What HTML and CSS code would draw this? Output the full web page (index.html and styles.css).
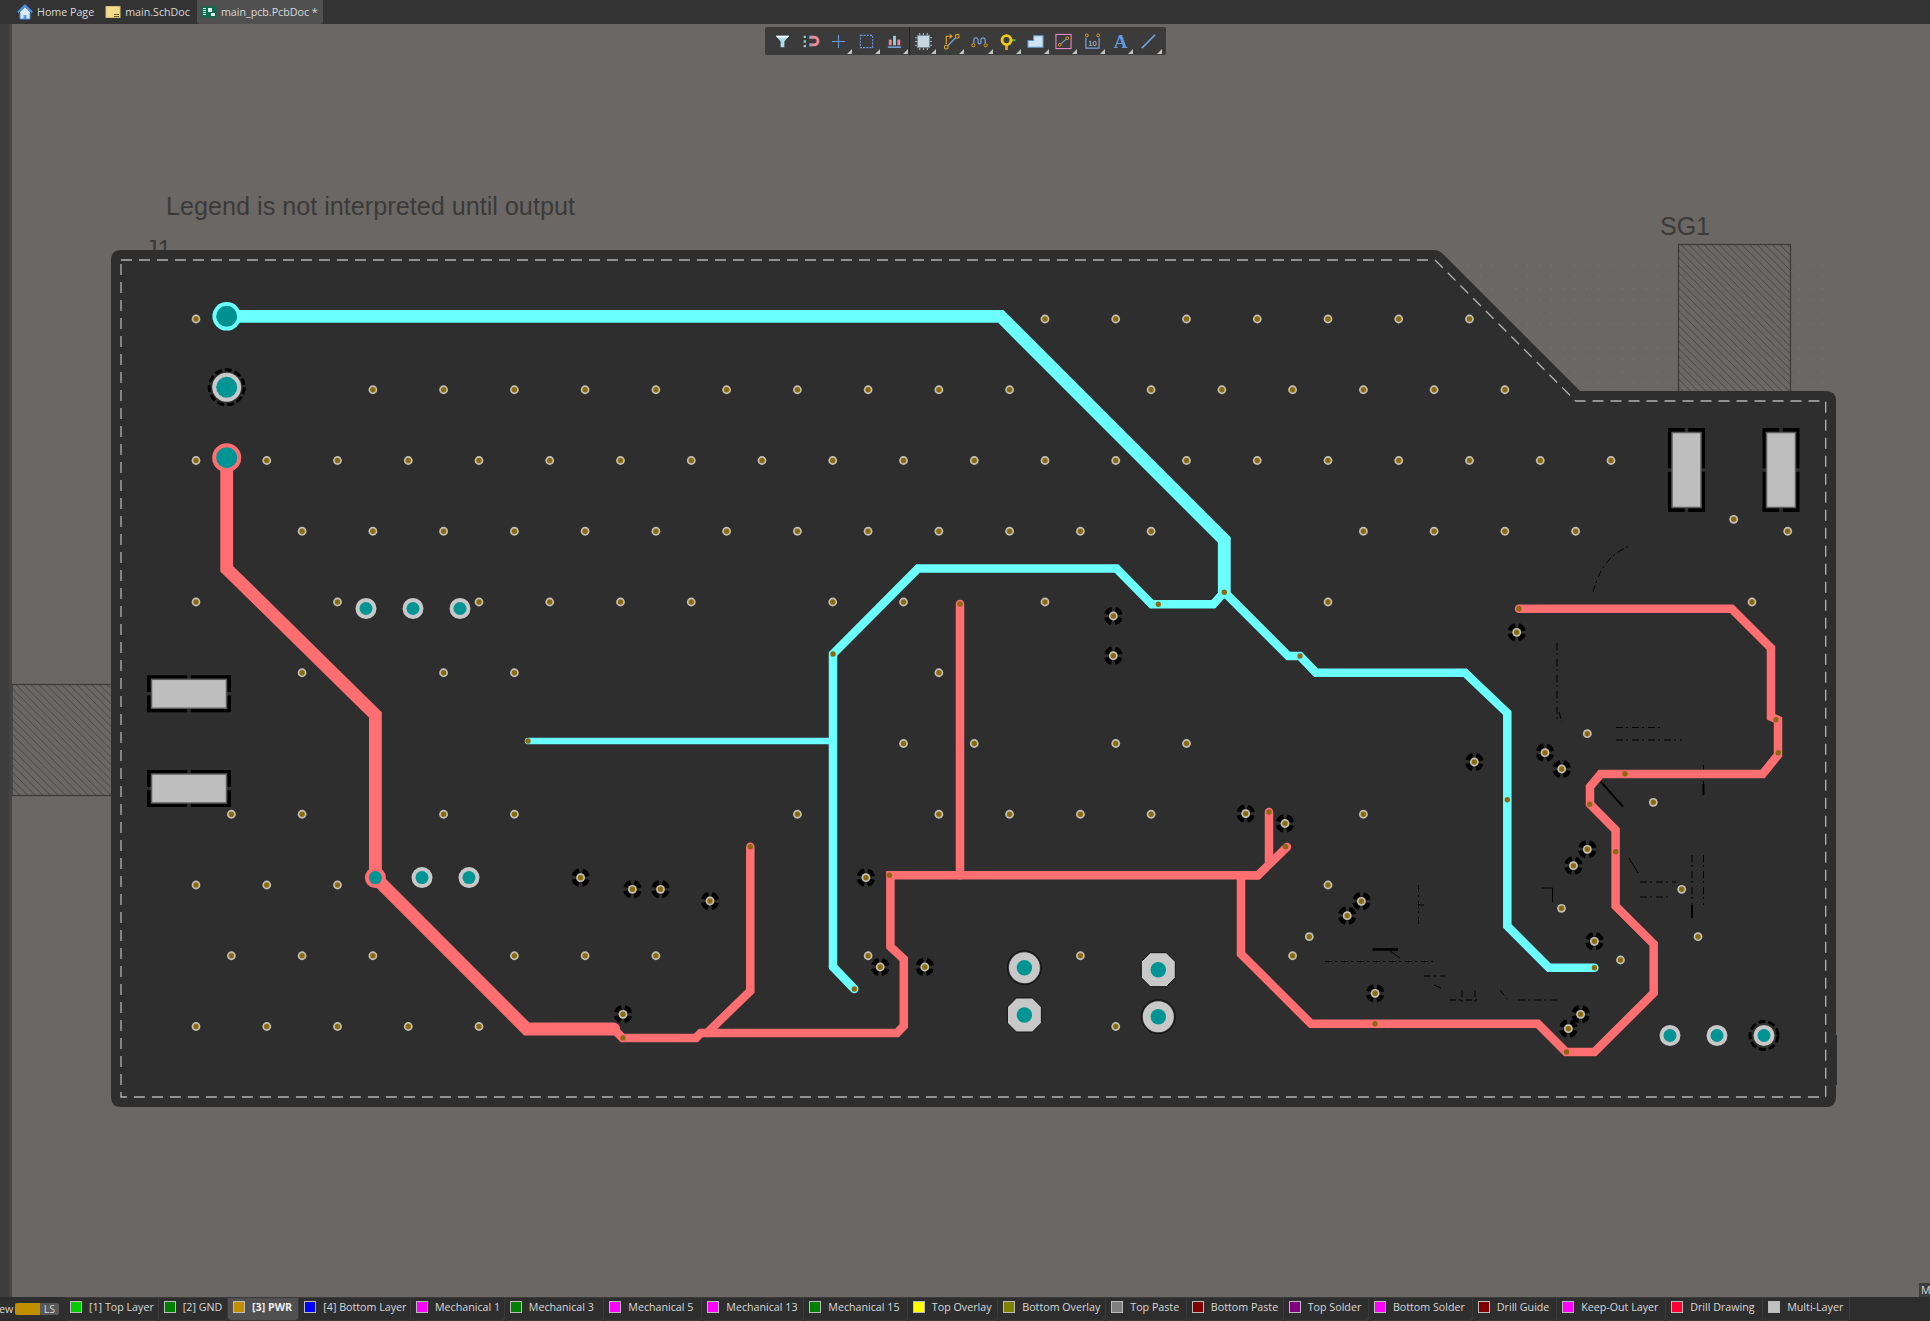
FILE: index.html
```html
<!DOCTYPE html>
<html lang="en">
<head>
    <meta charset="UTF-8">
    <meta name="viewport" content="width=device-width, initial-scale=1.0">
    <title>main_pcb.PcbDoc</title>
    <link rel="stylesheet" href="styles.css">
</head>
<body>
    <div class="tabbar">
        <div class="tab">
            <svg class="tab-icon" viewBox="0 0 16 16"><path d="M3 8v7h10V8L8 3z" fill="#dcebfb"/><path d="M6.5 15v-4h3v4z" fill="#5b9be8"/><path d="M.8 8.5 8 1.5l7.2 7" fill="none" stroke="#4a90e8" stroke-width="2"/><path d="M3 9v6h10V9" fill="none" stroke="#4a90e8" stroke-width="1"/></svg>
            <span>Home Page</span>
        </div>
        <div class="tab">
            <svg class="tab-icon" viewBox="0 0 16 16"><rect x="1" y="2.5" width="14" height="11" fill="#f7dc8c" stroke="#d9bf74"/><path d="M9 10.5h5M9 12.5h5" stroke="#6b5a2a"/></svg>
            <span>main.SchDoc</span>
        </div>
        <div class="tab tab-active">
            <svg class="tab-icon" viewBox="0 0 16 16"><rect x="0.5" y="2.5" width="15" height="11" fill="#0c6b50"/><path d="M2 4.5h3M2 6.5h3M2 8.5h3M2 10.5h3" stroke="#dff2ea"/><rect x="7" y="4" width="4" height="4" fill="#dff2ea"/><rect x="10" y="9" width="4" height="3" fill="#dff2ea"/></svg>
            <span>main_pcb.PcbDoc *</span>
        </div>
    </div>

    <div class="workspace">
        <div class="side-strip"></div>
        <div class="stage">
            <div class="toolbar">
                <div class="tool"><svg viewBox="0 0 18 18"><path d="M2 3h14l-5 6v6H7V9z" fill="#a9dcea"/><path d="M2 3h14l-1.5 2h-11z" fill="#eaf8fb"/></svg></div>
                <div class="tool"><svg viewBox="0 0 18 18"><path d="M8 3h5a5 5 0 0 1 0 11H8v-3h5a2 2 0 0 0 0-5H8z" fill="#f08a92"/><path d="M8 3h2v3H8zM8 11h2v3H8z" fill="#7fa8e0"/><path d="M3 3v12" stroke="#7fd0d0" stroke-width="2.4" stroke-dasharray="2.4 2.4"/></svg></div>
                <div class="tool has-menu"><svg viewBox="0 0 18 18"><path d="M9 2v14M2 9h14" stroke="#6f97dc" stroke-width="1.1" fill="none"/></svg></div>
                <div class="tool has-menu"><svg viewBox="0 0 18 18"><rect x="2.5" y="2.5" width="13" height="13" fill="none" stroke="#6f97e8" stroke-width="1.1" stroke-dasharray="2.2 1.2"/></svg></div>
                <div class="tool has-menu"><svg viewBox="0 0 18 18"><rect x="3" y="7" width="3" height="6" fill="#f08a92"/><rect x="7.5" y="3" width="3" height="10" fill="#8fd3e0"/><rect x="12" y="7" width="3" height="6" fill="#f08a92"/><path d="M2 15h14" stroke="#7fa8e0" stroke-width="1.6"/></svg></div>
                <div class="tool has-menu"><svg viewBox="0 0 18 18"><path d="M0 5h18M0 9h18M0 13h18M5 0v18M9 0v18M13 0v18" stroke="#a8b4bb" stroke-width="1.2"/><rect x="2.5" y="2.5" width="13" height="13" fill="#c6d6de" stroke="#6f8596"/></svg></div>
                <div class="tool has-menu"><svg viewBox="0 0 18 18"><circle cx="3.5" cy="15" r="2" fill="none" stroke="#e0a020" stroke-width="1.2"/><circle cx="15" cy="3.5" r="2" fill="none" stroke="#e0a020" stroke-width="1.2"/><path d="M5 13.5 13.5 5" stroke="#7f9cc8" stroke-width="1.4"/><path d="M3.5 12V3.5H9M7 1.500l2.500 2-2.500 2" fill="none" stroke="#e0a020" stroke-width="1.2"/></svg></div>
                <div class="tool has-menu"><svg viewBox="0 0 18 18"><circle cx="2.5" cy="13" r="1.7" fill="none" stroke="#e0a020"/><circle cx="15.500" cy="13" r="1.7" fill="none" stroke="#e0a020"/><path d="M3 11V7a2.3 2.3 0 0 1 4.500 0v3a1.500 1.500 0 0 0 3 0V7a2.3 2.3 0 0 1 4.500 0v4" fill="none" stroke="#7fa0d8" stroke-width="1.3"/></svg></div>
                <div class="tool has-menu"><svg viewBox="0 0 18 18"><path d="M11 6.5h6.500v2.200H11z" fill="#58b030"/><path d="M6.500 12h3v6h-3z" fill="#e8a020"/><circle cx="8" cy="7.500" r="4.800" fill="none" stroke="#f0c818" stroke-width="3"/></svg></div>
                <div class="tool has-menu"><svg viewBox="0 0 18 18"><path d="M1 15V8h6V3h10v12z" fill="#cfe6f2" stroke="#5f94c8" stroke-width="1.1"/></svg></div>
                <div class="tool has-menu"><svg viewBox="0 0 18 18"><rect x="1" y="1.5" width="16" height="15" fill="none" stroke="#f08ad0" stroke-width="1.1"/><circle cx="5" cy="12.500" r="1.500" fill="none" stroke="#e0a020"/><circle cx="13" cy="5.500" r="1.500" fill="none" stroke="#e0a020"/><path d="M6 11.500 12 6.500" stroke="#7f9cc8" stroke-width="1.3"/></svg></div>
                <div class="tool has-menu"><svg viewBox="0 0 18 18"><circle cx="3" cy="2.500" r="1.500" fill="none" stroke="#e0a020"/><circle cx="15" cy="2.500" r="1.500" fill="none" stroke="#e0a020"/><path d="M2 5v11h14V5" fill="none" stroke="#7fa0d8" stroke-width="1.3"/><text class="tool-number" x="9" y="13.500">10</text></svg></div>
                <div class="tool has-menu"><svg viewBox="0 0 18 18"><text class="tool-letter" x="9" y="16">A</text></svg></div>
                <div class="tool has-menu"><svg viewBox="0 0 18 18"><path d="M2 16 16 2" stroke="#6f9fdc" stroke-width="1.6"/></svg></div>
            </div>

            <svg class="board" width="1918" height="1273" viewBox="12 24 1918 1273">
                <defs>
                    <pattern id="hatch" patternUnits="userSpaceOnUse" width="7.6" height="7.6">
                        <path d="M-1-1 8.6 8.6M-1 6.600 1 8.600M6.600-1 8.600 1" stroke="#3a3a3a" stroke-width=".8"/>
                    </pattern>
                    <pattern id="griddots" patternUnits="userSpaceOnUse" width="11.8" height="11.8">
                        <rect x="5" y="5" width="1" height="1" fill="#7b7876"/>
                    </pattern>
                    <g id="via">
                        <circle r="4.4" fill="#c4c0b4"/>
                        <circle r="2.7" fill="#8b690f"/>
                    </g>
                    <g id="thermal">
                        <circle r="7" fill="none" stroke="#000" stroke-width="4.6" stroke-dasharray="7.5 3.5" stroke-dashoffset="-1.75"/>
                        <use href="#via"/>
                    </g>
                    <circle id="drill" r="2.7" fill="#8b690f"/>
                    <g id="small-pad">
                        <circle r="10.5" fill="#c8c8c8"/>
                        <circle r="6.5" fill="#009494"/>
                    </g>
                    <g id="big-pad">
                        <circle r="17" fill="none" stroke="#111" stroke-width="1"/>
                        <circle r="15.5" fill="#c8c8c8"/>
                        <circle r="7.7" fill="#009494"/>
                    </g>
                    <g id="octa-pad">
                        <path d="M-8-17H8L17-8V8L8 17H-8L-17 8V-8z" fill="#c8c8c8" stroke="#111" stroke-width="1"/>
                        <circle r="7.7" fill="#009494"/>
                    </g>
                    <g id="silver-pad">
                        <rect x="-42" y="-18.5" width="84" height="37" fill="#000"/>
                        <path d="M-44 0H44M0-20V20" stroke="#2e2e2e" stroke-width="3.5"/>
                        <rect x="-37.5" y="-14.5" width="75" height="29" fill="#bebebe" stroke="#5c5c5c" stroke-width="1.5"/>
                    </g>
                </defs>

                <!-- things under the board -->
                <rect x="1452" y="258" width="374" height="133" fill="url(#griddots)"/>
                <rect class="keepout-body" x="12" y="684.5" width="105" height="111"/>
                <rect class="keepout-body" x="1678.5" y="244.5" width="112" height="152"/>
                <text class="legend legend-long" x="166" y="215">Legend is not interpreted until output</text>
                <text class="legend" x="1660" y="235">SG1</text>
                <text class="legend" x="145" y="258">J1</text>

                <path class="pcb" d="M121 250H1433Q1439 250 1443 254L1580 391H1826Q1836 391 1836 401V1035H1837V1085H1836V1097Q1836 1107 1826 1107H121Q111 1107 111 1097V260Q111 250 121 250Z"/>
                <path class="outline" d="M121 260H1435L1575.7 401H1825.7V1097H121Z"/>

                <!-- silkscreen leftovers -->
                <g class="scribble">
                    <path d="M1557 643V722M1616 740H1682M1616 727.5H1660M1703.5 765V795M1593 592C1598 575 1605 555 1632 545"/>
                    <path d="M1325 961.5H1434M1518 1000H1558M1449 1000H1480M1424 976H1445M1418.5 885V925M1692 855V915M1703.5 855V905M1640 882H1676M1640 897H1672"/>
                    <path d="M1462 990V1002M1475 990V1002M1500 990 1508 1000M1559 712 1562 722M1418 905H1424"/>
                    <path class="solid" d="M1541 888H1552.5V902M1629 858 1638 873M1434 985 1441 988M1386 948 1400 958"/>
                    <path class="solid heavy" d="M1372.5 949.5H1398"/>
                    <path class="solid medium" d="M1600.7 781.7 1623 806.7M1692 905V918M1703.5 784V795"/>
                </g>

                <!-- top layer traces -->
                <g class="trace trace-cyan">
                    <path class="w13" d="M226.7 316.3H1000.7L1224.3 540V592"/>
                    <path d="M833 966.7V654L918 568.5H1116.5L1151.7 604.3H1213.3L1224.3 592L1288.3 656H1300L1316 672.7H1465L1507.3 713V926L1549 967.7H1594.4"/>
                    <path d="M833 966.7 854.3 989"/>
                    <path class="w6" d="M528 741H833"/>
                </g>

                <!-- power layer traces -->
                <g class="trace trace-red">
                    <path class="w13" d="M226.7 457.7V568.7L375.4 715V877.6L526.8 1029H613.7"/>
                    <path d="M613.7 1029 622.6 1038H696L700.7 1033H897L903.8 1026V959L890.4 946.7V875.3H1258L1287 847"/>
                    <path d="M960 604V875.3M750.3 846.7V991L707 1033M1269 812V862"/>
                    <path d="M1258 875.3H1241V954L1311 1023.7H1537.8L1566 1052H1594.4L1653.7 993V944L1615.6 906V830L1590 804V786.7L1600.7 774H1762.7L1778 755V720L1771 716.7V648L1731.7 608.7H1519"/>
                </g>

                <!-- pads on the left -->
                <circle cx="226.7" cy="316.3" r="14.3" fill="#6cffff"/>
                <circle cx="226.7" cy="316.3" r="10.5" fill="#009090"/>
                <circle cx="226.7" cy="387.3" r="17.5" class="black-ring"/>
                <circle cx="226.7" cy="387.3" r="14.5" fill="#c8c8c8"/>
                <circle cx="226.7" cy="387.3" r="10.5" fill="#009494"/>
                <circle cx="226.7" cy="457.7" r="14.5" fill="#ff6e70"/>
                <circle cx="226.7" cy="457.7" r="10.5" fill="#009494"/>
                <use href="#small-pad" x="366" y="608.5"/>
                <use href="#small-pad" x="413" y="608.5"/>
                <use href="#small-pad" x="460" y="608.5"/>
                <circle cx="375.4" cy="877.6" r="10.5" fill="#ff6e70"/>
                <circle cx="375.4" cy="877.6" r="6.5" fill="#009494"/>
                <use href="#small-pad" x="422" y="877.6"/>
                <use href="#small-pad" x="469" y="877.6"/>
                <use href="#silver-pad" x="189" y="693.8"/>
                <use href="#silver-pad" x="189" y="788.5"/>
                <use href="#silver-pad" transform="translate(1686.5 470) rotate(90)"/>
                <use href="#silver-pad" transform="translate(1781 470) rotate(90)"/>

                <!-- big pads in the middle and bottom right -->
                <use href="#big-pad" x="1024.4" y="967.7"/>
                <use href="#octa-pad" x="1024.4" y="1015"/>
                <use href="#octa-pad" x="1158.3" y="969.7"/>
                <use href="#big-pad" x="1158.3" y="1016.7"/>
                <use href="#small-pad" x="1670" y="1035.5"/>
                <use href="#small-pad" x="1717" y="1035.5"/>
                <circle cx="1764" cy="1035.5" r="14" class="black-ring"/>
                <use href="#small-pad" x="1764" y="1035.5"/>

                <!-- stitching vias, one group per grid row -->
                <g>
                    <use href="#via" x="196" y="319"/><use href="#via" x="1045" y="319"/><use href="#via" x="1115.75" y="319"/><use href="#via" x="1186.5" y="319"/><use href="#via" x="1257.25" y="319"/><use href="#via" x="1328" y="319"/><use href="#via" x="1398.75" y="319"/><use href="#via" x="1469.5" y="319"/>
                </g>
                <g>
                    <use href="#via" x="372.9" y="389.75"/><use href="#via" x="443.6" y="389.75"/><use href="#via" x="514.4" y="389.75"/><use href="#via" x="585.1" y="389.75"/><use href="#via" x="655.9" y="389.75"/><use href="#via" x="726.6" y="389.75"/><use href="#via" x="797.4" y="389.75"/><use href="#via" x="868.1" y="389.75"/><use href="#via" x="938.9" y="389.75"/><use href="#via" x="1009.6" y="389.75"/><use href="#via" x="1151.1" y="389.75"/><use href="#via" x="1221.9" y="389.75"/><use href="#via" x="1292.6" y="389.75"/><use href="#via" x="1363.4" y="389.75"/><use href="#via" x="1434.1" y="389.75"/><use href="#via" x="1504.9" y="389.75"/>
                </g>
                <g>
                    <use href="#via" x="196" y="460.5"/><use href="#via" x="266.75" y="460.5"/><use href="#via" x="337.5" y="460.5"/><use href="#via" x="408.25" y="460.5"/><use href="#via" x="479" y="460.5"/><use href="#via" x="549.75" y="460.5"/><use href="#via" x="620.5" y="460.5"/><use href="#via" x="691.25" y="460.5"/><use href="#via" x="762" y="460.5"/><use href="#via" x="832.75" y="460.5"/><use href="#via" x="903.5" y="460.5"/><use href="#via" x="974.25" y="460.5"/><use href="#via" x="1045" y="460.5"/><use href="#via" x="1115.75" y="460.5"/><use href="#via" x="1186.5" y="460.5"/><use href="#via" x="1257.25" y="460.5"/><use href="#via" x="1328" y="460.5"/><use href="#via" x="1398.75" y="460.5"/><use href="#via" x="1469.5" y="460.5"/><use href="#via" x="1540.25" y="460.5"/><use href="#via" x="1611" y="460.5"/>
                </g>
                <g>
                    <use href="#via" x="302.1" y="531.25"/><use href="#via" x="372.9" y="531.25"/><use href="#via" x="443.6" y="531.25"/><use href="#via" x="514.4" y="531.25"/><use href="#via" x="585.1" y="531.25"/><use href="#via" x="655.9" y="531.25"/><use href="#via" x="726.6" y="531.25"/><use href="#via" x="797.4" y="531.25"/><use href="#via" x="868.1" y="531.25"/><use href="#via" x="938.9" y="531.25"/><use href="#via" x="1009.6" y="531.25"/><use href="#via" x="1080.4" y="531.25"/><use href="#via" x="1151.1" y="531.25"/><use href="#via" x="1363.4" y="531.25"/><use href="#via" x="1434.1" y="531.25"/><use href="#via" x="1504.9" y="531.25"/><use href="#via" x="1575.6" y="531.25"/><use href="#via" x="1787.7" y="531.25"/>
                </g>
                <g>
                    <use href="#via" x="196" y="602"/><use href="#via" x="337.5" y="602"/><use href="#via" x="479" y="602"/><use href="#via" x="549.75" y="602"/><use href="#via" x="620.5" y="602"/><use href="#via" x="691.25" y="602"/><use href="#via" x="832.75" y="602"/><use href="#via" x="903.5" y="602"/><use href="#via" x="1045" y="602"/><use href="#via" x="1328" y="602"/><use href="#via" x="1752" y="602"/>
                </g>
                <g>
                    <use href="#via" x="302.1" y="672.75"/><use href="#via" x="443.6" y="672.75"/><use href="#via" x="514.4" y="672.75"/><use href="#via" x="938.9" y="672.75"/>
                </g>
                <g>
                    <use href="#via" x="903.5" y="743.5"/><use href="#via" x="974.25" y="743.5"/><use href="#via" x="1115.75" y="743.5"/><use href="#via" x="1186.5" y="743.5"/>
                </g>
                <g>
                    <use href="#via" x="231.4" y="814.25"/><use href="#via" x="302.1" y="814.25"/><use href="#via" x="443.6" y="814.25"/><use href="#via" x="514.4" y="814.25"/><use href="#via" x="797.4" y="814.25"/><use href="#via" x="938.9" y="814.25"/><use href="#via" x="1009.6" y="814.25"/><use href="#via" x="1080.4" y="814.25"/><use href="#via" x="1151.1" y="814.25"/><use href="#via" x="1363.4" y="814.25"/>
                </g>
                <g>
                    <use href="#via" x="196" y="885"/><use href="#via" x="266.75" y="885"/><use href="#via" x="337.5" y="885"/><use href="#via" x="1328" y="885"/>
                </g>
                <g>
                    <use href="#via" x="231.4" y="955.75"/><use href="#via" x="302.1" y="955.75"/><use href="#via" x="372.9" y="955.75"/><use href="#via" x="514.4" y="955.75"/><use href="#via" x="585.1" y="955.75"/><use href="#via" x="655.9" y="955.75"/><use href="#via" x="868.1" y="955.75"/><use href="#via" x="1080.4" y="955.75"/><use href="#via" x="1292.6" y="955.75"/>
                </g>
                <g>
                    <use href="#via" x="196" y="1026.5"/><use href="#via" x="266.75" y="1026.5"/><use href="#via" x="337.5" y="1026.5"/><use href="#via" x="408.25" y="1026.5"/><use href="#via" x="479" y="1026.5"/><use href="#via" x="1115.75" y="1026.5"/>
                </g>
                <!-- off grid vias -->
                <g>
                    <use href="#via" x="1733.7" y="519.3"/><use href="#via" x="1587.3" y="733.7"/><use href="#via" x="1653.3" y="802.3"/><use href="#via" x="1309.3" y="936.7"/><use href="#via" x="1561.5" y="908.3"/><use href="#via" x="1620.5" y="960"/><use href="#via" x="1681.7" y="889.3"/><use href="#via" x="1698" y="936.7"/>
                </g>
                <g>
                    <use href="#thermal" x="1516.7" y="632.3"/><use href="#thermal" x="1474.3" y="762"/><use href="#thermal" x="1545" y="752.7"/><use href="#thermal" x="1561.7" y="769"/><use href="#thermal" x="1587.3" y="849.3"/><use href="#thermal" x="1573.4" y="865.7"/><use href="#thermal" x="1361.4" y="901.3"/><use href="#thermal" x="1347.2" y="915.7"/><use href="#thermal" x="1594.4" y="941.3"/><use href="#thermal" x="1375.1" y="993.3"/><use href="#thermal" x="1580.6" y="1014.3"/><use href="#thermal" x="1568.4" y="1028.7"/>
                    <use href="#thermal" x="580.6" y="877.7"/><use href="#thermal" x="632.4" y="889.3"/><use href="#thermal" x="660.5" y="889.3"/><use href="#thermal" x="710" y="901"/><use href="#thermal" x="865.9" y="877.7"/><use href="#thermal" x="880.2" y="967"/><use href="#thermal" x="924.8" y="967"/><use href="#thermal" x="623" y="1014.3"/>
                    <use href="#thermal" x="1113.3" y="616"/><use href="#thermal" x="1113.3" y="655.7"/><use href="#thermal" x="1245.7" y="813.6"/><use href="#thermal" x="1285" y="823.5"/>
                </g>
                <!-- drills sitting on a trace -->
                <g>
                    <use href="#drill" x="1519" y="608.7"/><use href="#drill" x="1776" y="719.7"/><use href="#drill" x="1778.3" y="752.7"/><use href="#drill" x="1625" y="773.7"/><use href="#drill" x="1589.7" y="804.3"/><use href="#drill" x="1615.7" y="851.7"/><use href="#drill" x="1507.3" y="799.7"/><use href="#drill" x="1566.5" y="1052"/><use href="#drill" x="1375" y="1023.7"/><use href="#drill" x="1285.6" y="846.7"/><use href="#drill" x="750.3" y="846.7"/><use href="#drill" x="854.3" y="989"/><use href="#drill" x="889.5" y="875.3"/><use href="#drill" x="623" y="1038"/><use href="#drill" x="1158.3" y="604.3"/><use href="#drill" x="1224.3" y="592.3"/><use href="#drill" x="1300" y="656"/><use href="#drill" x="833" y="654"/><use href="#drill" x="528" y="741"/><use href="#drill" x="1269" y="812"/><use href="#drill" x="1594.4" y="967.7"/><use href="#drill" x="960" y="604"/>
                </g>
            </svg>

            <div class="right-stub">M</div>
        </div>
    </div>

    <div class="layerbar">
        <div class="layer-start">
            <span class="clipped-label">ew</span>
            <span class="ls-swatch"></span>
            <span class="ls-label">LS</span>
        </div>
        <div class="layers">
            <div class="layer"><i class="swatch c-top"></i>[1] Top Layer</div>
            <div class="layer"><i class="swatch c-green"></i>[2] GND</div>
            <div class="layer layer-active"><i class="swatch c-pwr"></i>[3] PWR</div>
            <div class="layer"><i class="swatch c-blue"></i>[4] Bottom Layer</div>
            <div class="layer"><i class="swatch c-pink"></i>Mechanical 1</div>
            <div class="layer"><i class="swatch c-green"></i>Mechanical 3</div>
            <div class="layer"><i class="swatch c-pink"></i>Mechanical 5</div>
            <div class="layer"><i class="swatch c-pink"></i>Mechanical 13</div>
            <div class="layer"><i class="swatch c-green"></i>Mechanical 15</div>
            <div class="layer"><i class="swatch c-yellow"></i>Top Overlay</div>
            <div class="layer"><i class="swatch c-olive"></i>Bottom Overlay</div>
            <div class="layer"><i class="swatch c-grey"></i>Top Paste</div>
            <div class="layer"><i class="swatch c-maroon"></i>Bottom Paste</div>
            <div class="layer"><i class="swatch c-purple"></i>Top Solder</div>
            <div class="layer"><i class="swatch c-pink"></i>Bottom Solder</div>
            <div class="layer"><i class="swatch c-maroon"></i>Drill Guide</div>
            <div class="layer"><i class="swatch c-pink"></i>Keep-Out Layer</div>
            <div class="layer"><i class="swatch c-red"></i>Drill Drawing</div>
            <div class="layer"><i class="swatch c-silver"></i>Multi-Layer</div>
        </div>
    </div>
</body>
</html>
```
FILE: styles.css
```css
body {
    margin: 0;
    width: 1930px;
    height: 1321px;
    overflow: hidden;
    display: flex;
    flex-direction: column;
    background: #333;
    font-family: "Open Sans", sans-serif;
    font-size: 10.7px;
    color: #d9d9d9;
}

/* document tabs */
.tabbar {
    height: 24px;
    flex: none;
    display: flex;
    padding-left: 17px;
    background: #333;
}

.tab {
    display: flex;
    align-items: center;
    gap: 4px;
    margin-right: 11px;
}

.tab-active {
    margin-right: 0;
    margin-left: -4px;
    padding: 0 5px 0 4px;
    background: #505050;
    border-radius: 0 0 2px 2px;
}

.tab-icon {
    width: 16px;
    height: 16px;
}

/* middle */
.workspace {
    flex: 1;
    display: flex;
    min-height: 0;
}

.side-strip {
    width: 9px;
    flex: none;
    background: #3c3c3c;
    border-right: 3px solid #444;
}

.stage {
    flex: 1;
    position: relative;
    background: #6b6765;
}

.board {
    position: absolute;
    left: 0;
    top: 0;
    display: block;
}

.right-stub {
    position: absolute;
    right: 0;
    bottom: 0;
    width: 11px;
    height: 14px;
    padding-left: 2px;
    box-sizing: border-box;
    overflow: hidden;
    background: #3c3c3c;
}

.toolbar {
    position: absolute;
    z-index: 1;
    left: 753px;
    top: 3px;
    width: 401px;
    height: 28px;
    display: flex;
    align-items: center;
    padding-left: 3px;
    box-sizing: border-box;
    background: #3b3b3b;
    border-radius: 2px;
}

.tool {
    width: 28.2px;
    height: 28px;
    flex: none;
    display: flex;
    align-items: center;
    justify-content: center;
    position: relative;
}

.tool svg {
    width: 17px;
    height: 17px;
    overflow: visible;
}

.tool:nth-child(6) {
    border-left: 1px solid #222;
    box-sizing: border-box;
}

.has-menu::after {
    content: "";
    position: absolute;
    right: 1px;
    bottom: 1px;
    border-left: 5px solid transparent;
    border-bottom: 5px solid #c4c4c4;
}

.tool-number {
    font-family: "Liberation Sans", sans-serif;
    font-size: 8px;
    text-anchor: middle;
    fill: #c8d4e0;
}

.tool-letter {
    font-family: "Liberation Serif", serif;
    font-size: 20px;
    font-weight: bold;
    text-anchor: middle;
    fill: #5f9be0;
}

/* board drawing */
.pcb {
    fill: #2e2e2e;
}

.outline {
    fill: none;
    stroke: #b4b4b4;
    stroke-width: 1.3;
    stroke-dasharray: 11 7;
}

.keepout-body {
    fill: url(#hatch);
    stroke: #3a3a3a;
    stroke-width: 1.2;
}

.legend {
    font-family: "Liberation Sans", sans-serif;
    font-size: 25px;
    fill: #3a3a3a;
}

.legend-long {
    font-size: 25.2px;
}

.scribble path {
    fill: none;
    stroke: #000;
    stroke-width: 1;
    stroke-dasharray: 7 3 2 4;
}

.scribble path.solid {
    stroke-dasharray: none;
}

.scribble path.medium {
    stroke-width: 2;
}

.scribble path.heavy {
    stroke-width: 2.5;
}

.trace path {
    fill: none;
    stroke-width: 8.5;
    stroke-linecap: round;
    stroke-linejoin: miter;
}

.trace path.w13 {
    stroke-width: 12.8;
}

.trace path.w6 {
    stroke-width: 6.5;
}

.trace-cyan path {
    stroke: #6cffff;
}

.trace-red path {
    stroke: #ff6e70;
}

.black-ring {
    fill: none;
    stroke: #000;
    stroke-width: 3;
    stroke-dasharray: 7 3;
}

/* layer tabs */
.layerbar {
    height: 24px;
    flex: none;
    display: flex;
    background: #2e2e2e;
}

.layer-start {
    width: 65px;
    flex: none;
    display: flex;
    align-items: center;
    position: relative;
    padding-left: 15px;
    box-sizing: border-box;
}

.clipped-label {
    position: absolute;
    left: -1px;
}

.ls-swatch {
    width: 25px;
    height: 12px;
    background: #bf8f00;
    border-radius: 2px 0 0 2px;
}

.ls-label {
    width: 19px;
    height: 12px;
    line-height: 12px;
    text-align: center;
    background: #585858;
    border-radius: 0 2px 2px 0;
}

.layers {
    display: grid;
    grid-template-columns: 93.8px 69.2px 71.3px 111.7px 93.8px 99.5px 98px 102px 103.6px 90.4px 108px 80.6px 96.9px 85.2px 103.9px 84.4px 109px 97px 87px;
}

.layer {
    display: flex;
    align-items: center;
    padding: 0 0 4px 5px;
    box-sizing: border-box;
    white-space: nowrap;
    border: 1px solid #3a3a3a;
    border-left: 0;
    border-radius: 0 0 4px 4px;
}

.layer-active {
    background: #505050;
    font-weight: bold;
    color: #eee;
}

.swatch {
    width: 10px;
    height: 10px;
    margin-right: 7px;
    border: 1px solid #bbb;
    flex: none;
}

.c-top { background: #00cc00; }
.c-green { background: #008000; }
.c-pwr { background: #bf8f00; }
.c-blue { background: #0000ff; }
.c-pink { background: #ff00ff; }
.c-yellow { background: #ffff00; }
.c-olive { background: #808000; }
.c-grey { background: #808080; }
.c-maroon { background: #800000; }
.c-purple { background: #800080; }
.c-red { background: #ff0033; }
.c-silver { background: #c0c0c0; }
```
